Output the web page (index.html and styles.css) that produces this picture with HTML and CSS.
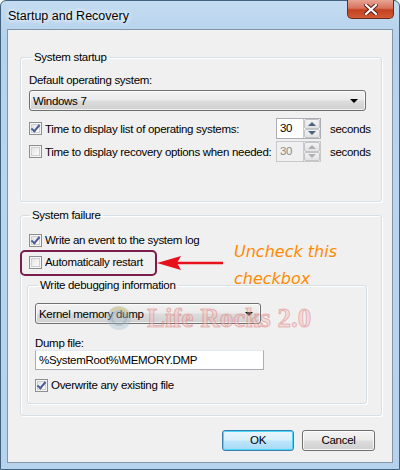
FILE: index.html
```html
<!DOCTYPE html>
<html>
<head>
<meta charset="utf-8">
<link rel="stylesheet" href="styles.css">
</head>
<body>
<div class="window">
  <div class="titlebar">
    <span class="title">Startup and Recovery</span>
    <div class="close"><svg width="14" height="11" viewBox="0 0 14 11"><path d="M2 1 L12 10 M12 1 L2 10" stroke="#5a1a10" stroke-width="4" stroke-linecap="square"/><path d="M2 1 L12 10 M12 1 L2 10" stroke="#fff" stroke-width="2.2" stroke-linecap="square"/></svg></div>
  </div>
  <div class="client">
    <fieldset class="group g1">
      <legend>System startup</legend>
      <div class="label">Default operating system:</div>
      <div class="combo wide"><span>Windows 7</span><i class="arrow"></i></div>
      <div class="srow first">
        <span class="cb checked"></span>
        <span class="stext">Time to display list of operating systems:</span>
        <div class="spin"><span class="val">30</span><span class="btns"><i class="up"></i><i class="down"></i></span></div>
        <span class="sec">seconds</span>
      </div>
      <div class="srow">
        <span class="cb"></span>
        <span class="stext">Time to display recovery options when needed:</span>
        <div class="spin disabled"><span class="val">30</span><span class="btns"><i class="up"></i><i class="down"></i></span></div>
        <span class="sec">seconds</span>
      </div>
    </fieldset>

    <fieldset class="group g2">
      <legend>System failure</legend>
      <div class="crow r1"><span class="cb checked"></span><span>Write an event to the system log</span></div>
      <div class="crow r2"><span class="cb"></span><span>Automatically restart</span></div>
      <fieldset class="group g3">
        <legend>Write debugging information</legend>
        <div class="combo dump"><span>Kernel memory dump</span><i class="arrow"></i></div>
        <div class="label dlabel">Dump file:</div>
        <div class="textbox">%SystemRoot%\MEMORY.DMP</div>
        <div class="crow r3"><span class="cb checked"></span><span>Overwrite any existing file</span></div>
      </fieldset>
    </fieldset>

    <div class="buttons">
      <div class="btn default">OK</div>
      <div class="btn">Cancel</div>
    </div>
  </div>

  <div class="watermark">
    <svg class="globe" width="28" height="30" viewBox="0 0 28 30"><circle cx="14" cy="15" r="12" fill="#9fb6c8" opacity="0.35"/><circle cx="14" cy="15" r="7" fill="none" stroke="#8aa0b0" stroke-width="2" opacity="0.4"/><path d="M6 8 Q14 2 22 9" stroke="#d9c060" stroke-width="3" fill="none" opacity="0.5"/></svg>
    <span class="wmtext">Life Rocks 2.0</span>
  </div>

  <div class="highlight"></div>
  <svg class="arrowsvg" width="70" height="16" viewBox="0 0 70 16"><path d="M20 8 H66" stroke="#e8101a" stroke-width="2.5"/><path d="M0 8 L24 1 L20 8 L24 15 Z" fill="#e8101a"/></svg>
  <div class="note">Uncheck this<br>checkbox</div>
</div>
</body>
</html>
```
FILE: styles.css
```css
html, body {
  margin: 0;
  padding: 0;
  width: 400px;
  height: 470px;
  overflow: hidden;
  background: #fff;
}
.window {
  position: relative;
  width: 400px;
  height: 470px;
  box-sizing: border-box;
  border: 1px solid #41627f;
  border-radius: 6px 6px 0 0;
  background: linear-gradient(180deg, #c4dcf1 0%, #b5d1ec 8%, #bad5ee 40%, #b6d2ec 100%);
  font-family: "Liberation Sans", Arial, sans-serif;
  font-size: 11.5px;
  letter-spacing: -0.3px;
  color: #000;
  white-space: nowrap;
}
.titlebar {
  height: 28px;
  display: flex;
  align-items: center;
  justify-content: space-between;
  padding-left: 7px;
}
.title {
  font-size: 12.5px;
  letter-spacing: 0;
  line-height: 16px;
  margin-top: 2px;
  text-shadow: 0 0 6px #fff, 0 0 4px #fff;
}
.close {
  align-self: flex-start;
  width: 47px;
  height: 19px;
  margin-right: 5px;
  margin-top: -1px;
  box-sizing: border-box;
  border: 1px solid #6b2a22;
  border-top: none;
  border-radius: 0 0 5px 5px;
  background: linear-gradient(180deg, #e8a493 0%, #d7735d 45%, #c3421f 55%, #d25a35 100%);
  display: flex;
  align-items: center;
  justify-content: center;
}
.client {
  margin: 0 6px 0 6px;
  height: 434px;
  box-sizing: border-box;
  border: 1px solid #8295a9;
  background: #f0f0f0;
  padding: 19px 10px 0 12px;
}
.group {
  margin: 0;
  border: 1px solid #d5dfe5;
  border-radius: 3px;
  box-shadow: inset 1px 1px 0 #fff, 1px 1px 0 #fff;
  padding: 0 15px 0 8px;
  min-width: 0;
}
.group legend {
  padding: 0 2px;
  margin-left: 3px;
  line-height: 16px;
  height: 16px;
}
.g1 {
  height: 153px;
  box-sizing: border-box;
}
.label {
  line-height: 16px;
  margin-top: 7px;
}
.combo {
  box-sizing: border-box;
  height: 21px;
  border: 1px solid #707070;
  border-radius: 3px;
  background: linear-gradient(180deg, #f2f2f2 0%, #ebebeb 48%, #dddddd 52%, #cfcfcf 100%);
  box-shadow: inset 0 0 0 1px rgba(255,255,255,0.7);
  display: flex;
  align-items: center;
  justify-content: space-between;
  padding: 0 7px 0 3px;
  line-height: 16px;
}
.combo.wide {
  margin-top: 2px;
  width: 337px;
}
.arrow {
  width: 0;
  height: 0;
  border-left: 4px solid transparent;
  border-right: 4px solid transparent;
  border-top: 4px solid #000;
}
.srow {
  display: flex;
  align-items: center;
  height: 21px;
  margin-top: 2px;
  width: 337px;
}
.srow.first {
  margin-top: 7px;
}
.cb {
  width: 13px;
  height: 13px;
  box-sizing: border-box;
  border: 1px solid #8e8f8f;
  background: linear-gradient(135deg, #dcdcdc 0%, #f4f4f4 60%, #fff 100%);
  box-shadow: inset 0 0 0 1px #f4f4f4, inset 0 0 0 2px #d0d0d0;
  margin-right: 3px;
  flex: none;
  position: relative;
}
.cb.checked::after {
  content: "";
  position: absolute;
  left: 3px;
  top: 0px;
  width: 3px;
  height: 7px;
  border-right: 2px solid #4a5f97;
  border-bottom: 2px solid #4a5f97;
  transform: rotate(40deg);
}
.stext {
  flex: 1;
  min-width: 0;
  overflow: hidden;
}
.spin {
  box-sizing: border-box;
  width: 45px;
  height: 21px;
  border: 1px solid #abadb3;
  background: #fff;
  display: flex;
  margin-right: 9px;
  flex: none;
}
.spin .val {
  flex: 1;
  line-height: 19px;
  padding-left: 3px;
}
.spin .btns {
  width: 16px;
  display: flex;
  flex-direction: column;
  border-left: 1px solid #c9cbd0;
}
.spin .btns i {
  flex: 1;
  display: flex;
  align-items: center;
  justify-content: center;
  background: linear-gradient(180deg, #f3f3f3, #e2e2e2);
  border: 1px solid #c2c4c8;
  border-radius: 2px;
}
.spin .btns i::after {
  content: "";
  border-left: 4px solid transparent;
  border-right: 4px solid transparent;
}
.spin .up::after { border-bottom: 4px solid #4d6185; }
.spin .down::after { border-top: 4px solid #4d6185; }
.spin.disabled {
  background: #f0f0f0;
  border-color: #c9c9c9;
  color: #8a8a8a;
}
.spin.disabled .btns i::after { border-bottom-color: #b0b0b0; border-top-color: #b0b0b0; }
.spin.disabled .up::after { border-top-color: transparent; }
.spin.disabled .down::after { border-bottom-color: transparent; }
.sec {
  width: 36px;
  flex: none;
}
.g2 {
  margin-top: 5px;
  padding: 0 14px 11px 6px;
}
.crow {
  display: flex;
  align-items: center;
  height: 16px;
  line-height: 16px;
  margin-left: 2px;
}
.crow.r1 { margin-top: 9px; }
.crow.r2 { margin-top: 6px; }
.g3 {
  margin-top: 7px;
  padding: 0 10px 10px 7px;
}
.combo.dump {
  margin-top: 10px;
  width: 226px;
}
.dlabel {
  margin-top: 12px;
  line-height: 14px;
}
.textbox {
  box-sizing: border-box;
  width: 229px;
  height: 20px;
  border: 1px solid #abadb3;
  border-top-color: #e3e9ef;
  background: #fff;
  line-height: 18px;
  padding-left: 3px;
}
.crow.r3 {
  margin-top: 7px;
  margin-left: 0;
}
.buttons {
  display: flex;
  justify-content: flex-end;
  gap: 8px;
  margin-top: 14px;
  padding-right: 7px;
}
.btn {
  box-sizing: border-box;
  width: 73px;
  height: 21px;
  border: 1px solid #707070;
  border-radius: 3px;
  background: linear-gradient(180deg, #f2f2f2 0%, #ebebeb 48%, #dddddd 52%, #cfcfcf 100%);
  box-shadow: inset 0 0 0 1px rgba(255,255,255,0.8);
  text-align: center;
  line-height: 19px;
}
.btn.default {
  width: 72px;
  border-color: #3c7fb1;
  background: linear-gradient(180deg, #eaf6fd 0%, #d9f0fc 48%, #bee6fd 52%, #a7d9f5 100%);
  box-shadow: inset 0 0 0 1px #48d7fb;
}
.watermark {
  position: absolute;
  left: 104px;
  top: 302px;
  display: flex;
  align-items: center;
  gap: 14px;
  pointer-events: none;
  letter-spacing: 0;
}
.wmtext {
  font-family: "Liberation Serif", serif;
  font-weight: bold;
  font-size: 27px;
  line-height: 30px;
  color: rgba(245, 190, 190, 0.45);
  -webkit-text-stroke: 1px rgba(210, 90, 90, 0.38);
}
.highlight {
  position: absolute;
  left: 19px;
  top: 249px;
  width: 137px;
  height: 26px;
  box-sizing: border-box;
  border: 2px solid #7a1d4c;
  border-radius: 5px;
}
.arrowsvg {
  position: absolute;
  left: 156px;
  top: 254px;
}
.note {
  position: absolute;
  left: 233px;
  top: 237px;
  color: #ff8a00;
  font-family: "DejaVu Sans", sans-serif;
  font-style: italic;
  font-size: 16px;
  letter-spacing: 0;
  line-height: 27px;
}
```
